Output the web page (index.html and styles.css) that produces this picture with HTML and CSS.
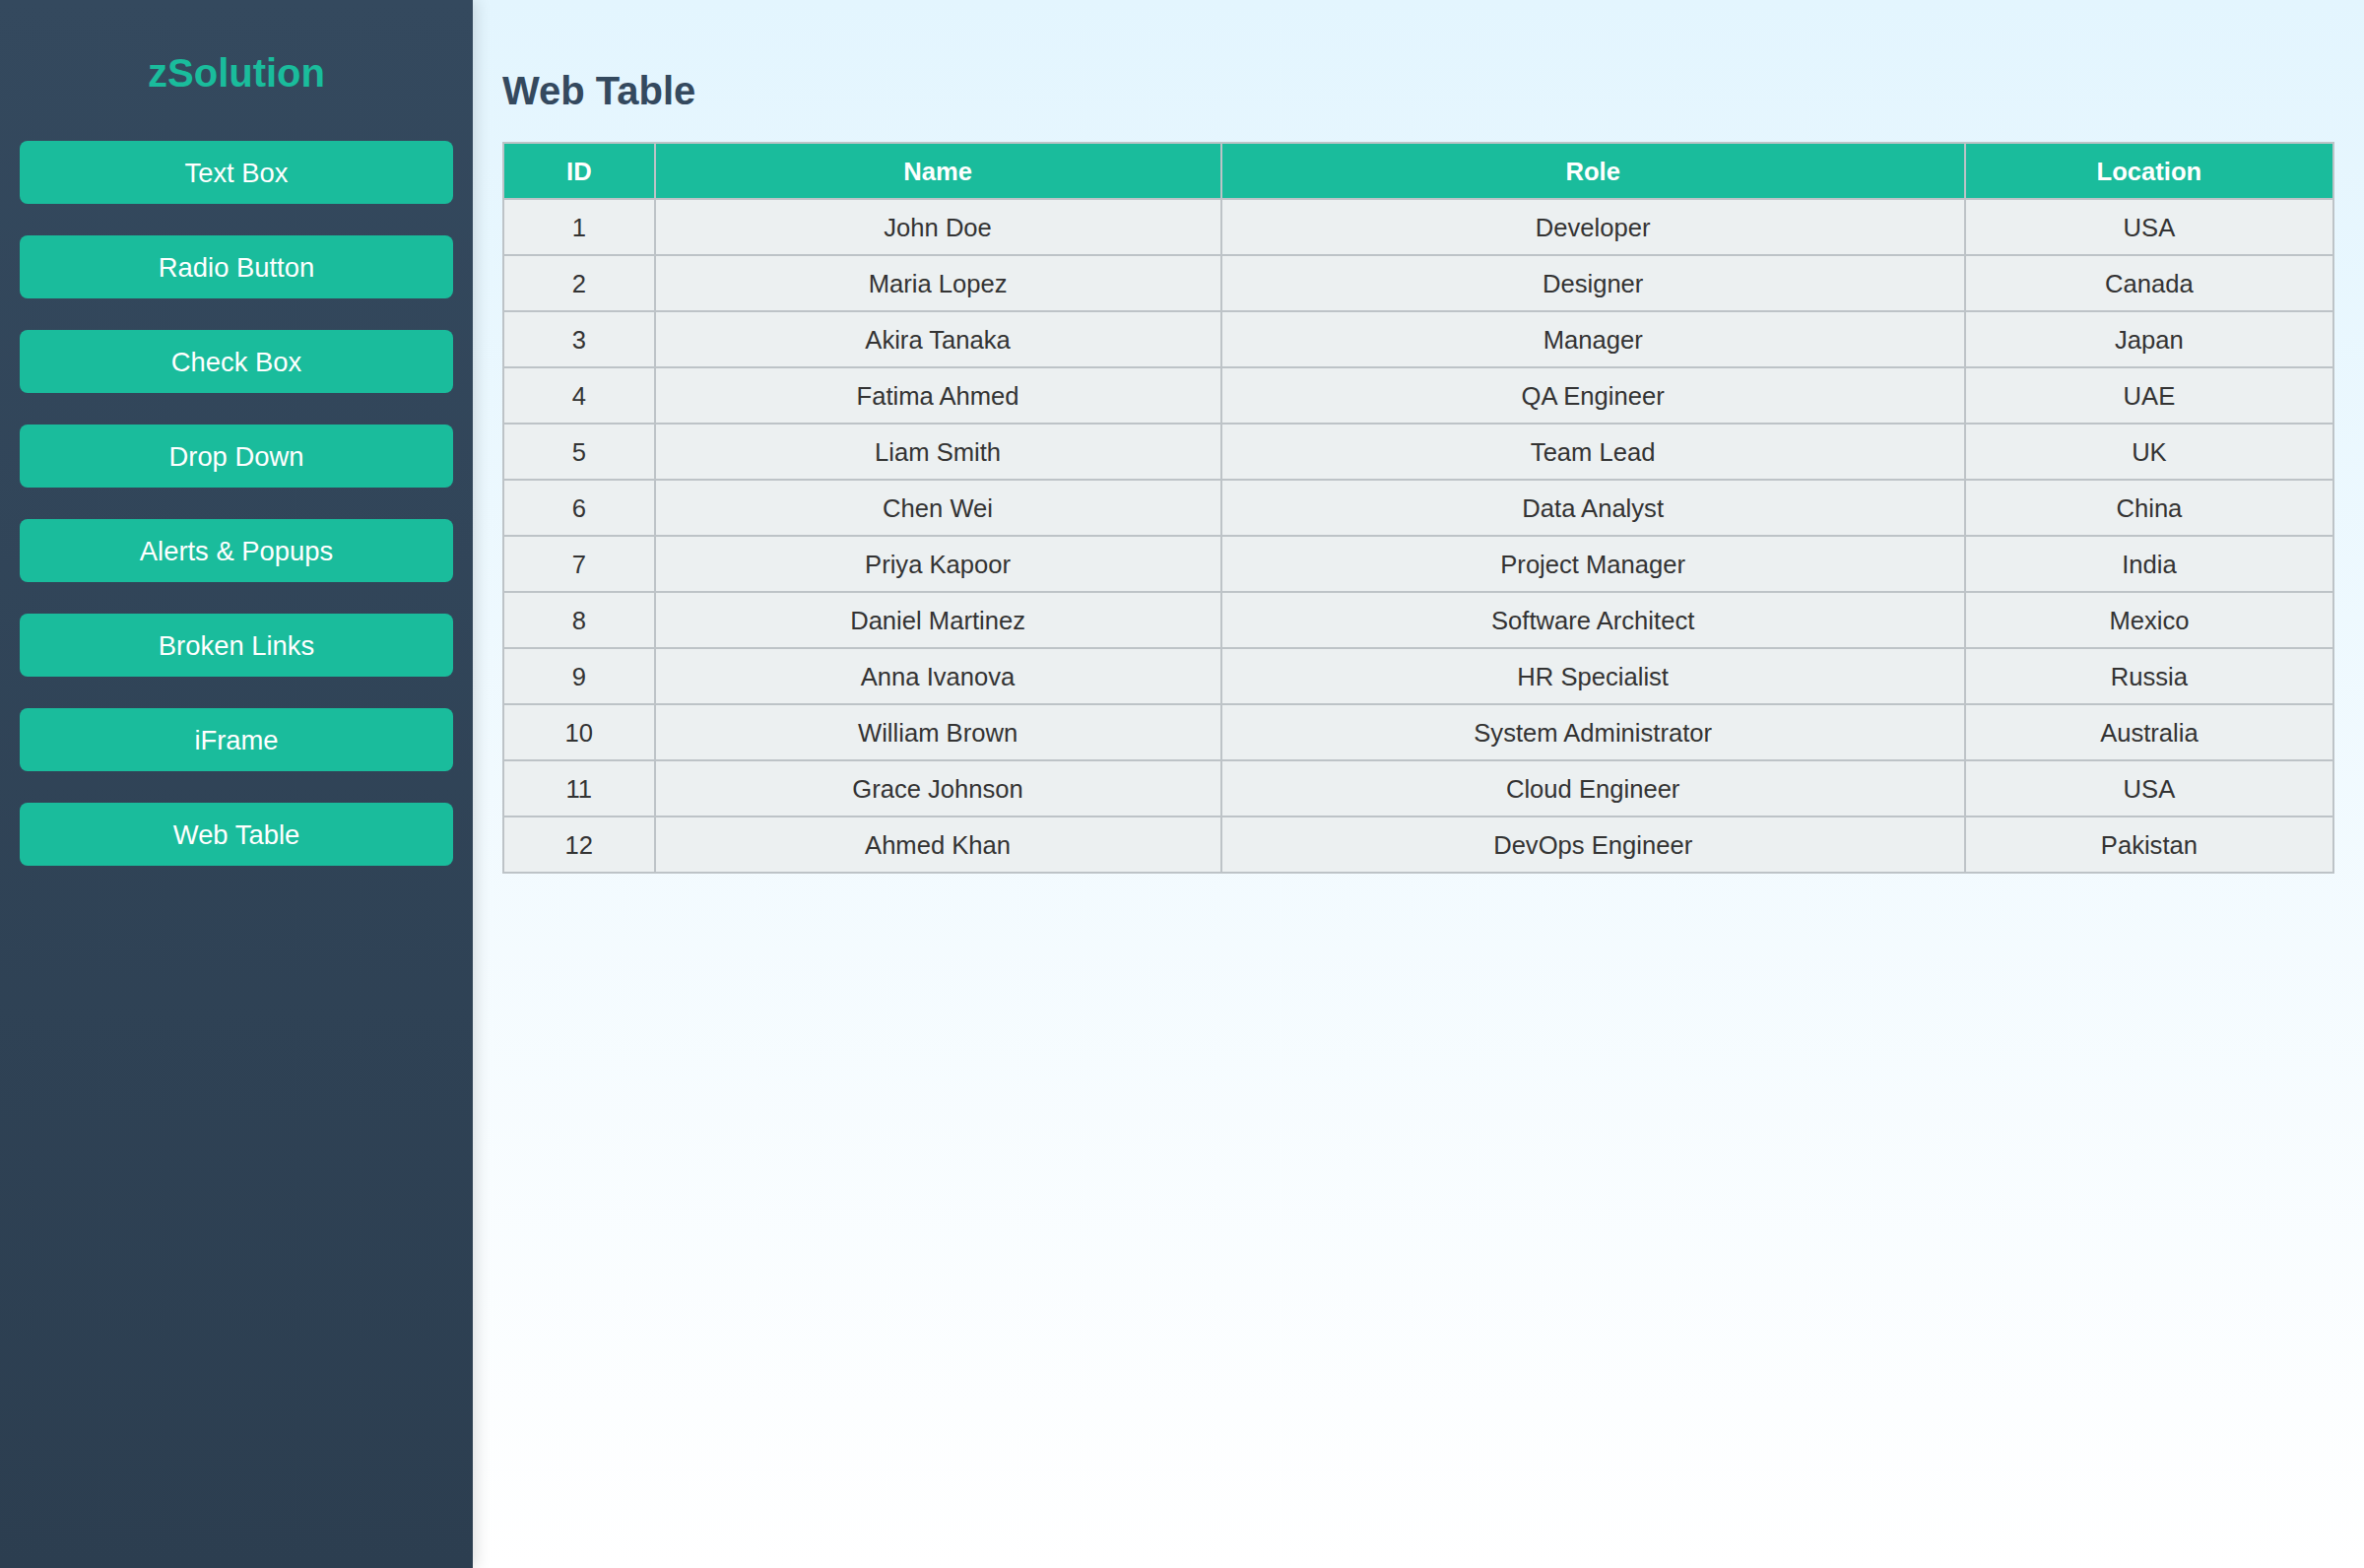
FILE: index.html
```html
<!DOCTYPE html>
<html lang="en">
<head>
<meta charset="utf-8">
<title>zSolution - Web Table</title>
<link rel="stylesheet" href="styles.css">
</head>
<body>
<div class="layout">
  <aside class="sidebar">
    <h2 class="brand">zSolution</h2>
    <nav class="menu">
      <a class="menu-btn" href="#">Text Box</a>
      <a class="menu-btn" href="#">Radio Button</a>
      <a class="menu-btn" href="#">Check Box</a>
      <a class="menu-btn" href="#">Drop Down</a>
      <a class="menu-btn" href="#">Alerts &amp; Popups</a>
      <a class="menu-btn" href="#">Broken Links</a>
      <a class="menu-btn" href="#">iFrame</a>
      <a class="menu-btn" href="#">Web Table</a>
    </nav>
  </aside>
  <main class="content">
    <h1 class="page-title">Web Table</h1>
    <table class="data-table">
      <thead>
        <tr><th>ID</th><th>Name</th><th>Role</th><th>Location</th></tr>
      </thead>
      <tbody>
        <tr><td>1</td><td>John Doe</td><td>Developer</td><td>USA</td></tr>
        <tr><td>2</td><td>Maria Lopez</td><td>Designer</td><td>Canada</td></tr>
        <tr><td>3</td><td>Akira Tanaka</td><td>Manager</td><td>Japan</td></tr>
        <tr><td>4</td><td>Fatima Ahmed</td><td>QA Engineer</td><td>UAE</td></tr>
        <tr><td>5</td><td>Liam Smith</td><td>Team Lead</td><td>UK</td></tr>
        <tr><td>6</td><td>Chen Wei</td><td>Data Analyst</td><td>China</td></tr>
        <tr><td>7</td><td>Priya Kapoor</td><td>Project Manager</td><td>India</td></tr>
        <tr><td>8</td><td>Daniel Martinez</td><td>Software Architect</td><td>Mexico</td></tr>
        <tr><td>9</td><td>Anna Ivanova</td><td>HR Specialist</td><td>Russia</td></tr>
        <tr><td>10</td><td>William Brown</td><td>System Administrator</td><td>Australia</td></tr>
        <tr><td>11</td><td>Grace Johnson</td><td>Cloud Engineer</td><td>USA</td></tr>
        <tr><td>12</td><td>Ahmed Khan</td><td>DevOps Engineer</td><td>Pakistan</td></tr>
      </tbody>
    </table>
  </main>
</div>
</body>
</html>
```

FILE: styles.css
```css
* {
  box-sizing: border-box;
}

html, body {
  margin: 0;
  padding: 0;
  height: 100%;
}

body {
  font-family: "Liberation Sans", Arial, Helvetica, sans-serif;
  color: #333333;
}

.layout {
  display: flex;
  min-height: 100vh;
}

.sidebar {
  flex: 0 0 480px;
  width: 480px;
  background: linear-gradient(to bottom, #34495e 0%, #2c3e50 100%);
  padding: 20px;
  box-shadow: 4px 0 14px rgba(0, 0, 0, 0.12);
  position: relative;
  z-index: 1;
}

.brand {
  margin: 32px 0 46px;
  text-align: center;
  color: #1abc9c;
  font-size: 40px;
  font-weight: bold;
}

.menu {
  display: flex;
  flex-direction: column;
  gap: 32px;
}

.menu-btn {
  display: flex;
  align-items: center;
  justify-content: center;
  height: 64px;
  padding-top: 2px;
  background: #1abc9c;
  color: #ffffff;
  text-decoration: none;
  font-size: 27.4px;
  border-radius: 8px;
}

.content {
  flex: 1;
  padding: 40px 30px 30px;
  background: linear-gradient(to bottom, #e3f5fe 0%, #ffffff 100%);
}

.page-title {
  margin: 30px 0 29px;
  color: #34495e;
  font-size: 40px;
  font-weight: bold;
}

.data-table {
  width: 100%;
  border-collapse: collapse;
  font-size: 25.6px;
  line-height: 30px;
}

.data-table th,
.data-table td {
  border: 2px solid #bdc3c7;
  padding: 12.5px 12px;
  text-align: center;
}

.data-table th {
  background: #1abc9c;
  color: #ffffff;
  font-weight: bold;
}

.data-table td {
  background: #ecf0f1;
  color: #333333;
}
```
